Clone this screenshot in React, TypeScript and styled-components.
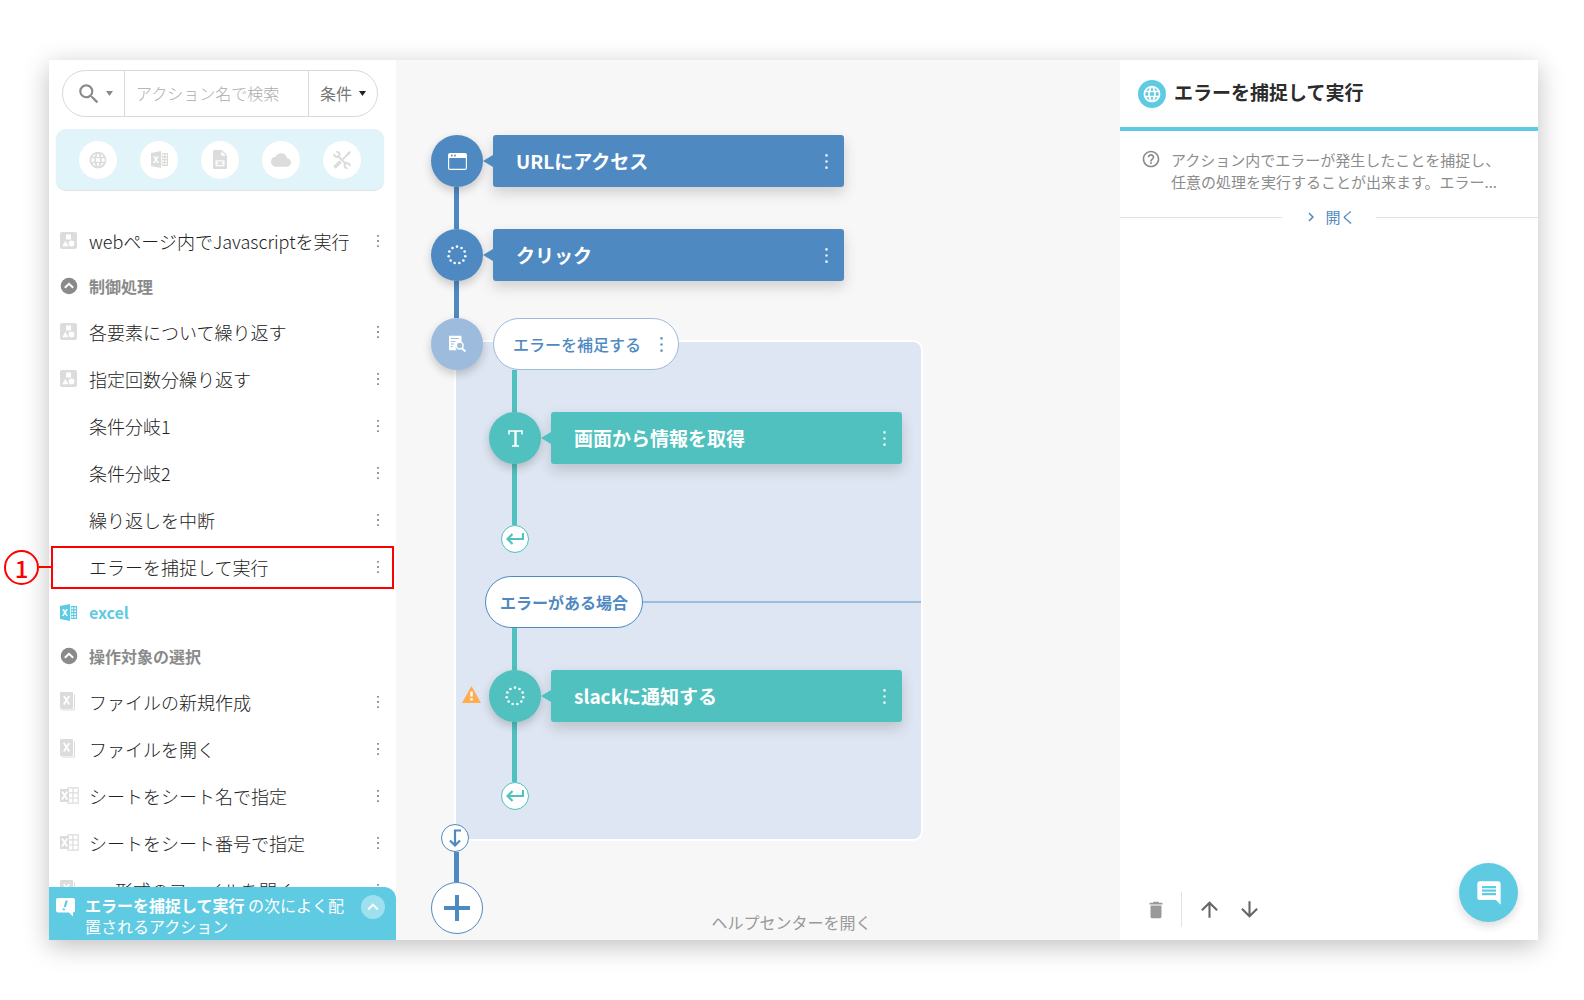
import React from "react";
import styled, { createGlobalStyle, css } from "styled-components";
import {
  MdSearch,
  MdLanguage,
  MdCloud,
  MdComment,
  MdHelpOutline,
  MdDelete,
  MdArrowUpward,
  MdArrowDownward,
  MdKeyboardArrowUp,
  MdChevronRight,
} from "react-icons/md";

const blue = "#4f89c2";
const paleBlue = "#9cbbdd";
const green = "#50c1be";
const cyan = "#5fcbe2";
const groupFill = "#dde6f2";
const grey = "#dcdcdc";

const GlobalStyle = createGlobalStyle`
  *, *::before, *::after { box-sizing: border-box; }
  body { margin: 0; background: #fff; }
  body, button, input, select {
    font-family: "Noto Sans CJK JP", "Noto Sans", sans-serif;
  }
  button { padding: 0; border: 0; background: none; color: inherit; cursor: pointer; }
  h1, h2, h3, p, ul { margin: 0; padding: 0; font-weight: inherit; }
  svg { display: block; flex: none; }
`;

const Page = styled.div`
  height: 100vh;
  padding: 60px 46px 60px 49px;
`;

const Window = styled.div`
  display: flex;
  height: 100%;
  background: #fff;
  box-shadow: 0 6px 24px rgba(0, 0, 0, 0.25);
`;

/* ---------- sidebar ---------- */

const Sidebar = styled.aside`
  display: flex;
  flex-direction: column;
  flex: none;
  width: 347px;
  min-height: 0;
`;

const SearchBar = styled.form`
  display: flex;
  height: 47px;
  margin: 10px 18px 12px 13px;
  border: 1px solid #d8d8d8;
  border-radius: 24px;
`;

const SearchKind = styled.button`
  display: flex;
  align-items: center;
  gap: 4px;
  width: 61px;
  padding-left: 13px;
  color: #8a8a8a;
`;

const SearchInput = styled.input`
  flex: 1;
  min-width: 0;
  padding: 0 11px 2px;
  border: solid #d8d8d8;
  border-width: 0 1px;
  background: none;
  font-size: 16px;
  font-weight: 300;
  outline: none;
  &::placeholder { color: #acacac; }
`;

const Filter = styled.label`
  display: flex;
  align-items: center;
  gap: 1px;
  width: 68px;
  padding-left: 11px;
  color: #222;
`;

const FilterSelect = styled.select`
  appearance: none;
  width: 38px;
  padding: 0 0 2px;
  border: 0;
  background: none;
  color: #777;
  font-size: 16px;
`;

const Categories = styled.nav`
  display: flex;
  align-items: center;
  justify-content: space-between;
  flex: none;
  height: 61px;
  margin: 0 12px 0 7px;
  padding: 0 23px;
  border-radius: 10px;
  background: #e0f4f9;
  box-shadow: 0 1px 1px rgba(0, 0, 0, 0.12);
`;

const CategoryButton = styled.button`
  display: grid;
  place-items: center;
  width: 38px;
  height: 38px;
  border-radius: 50%;
  background: #fff;
  color: ${grey};
`;

const ActionList = styled.ul`
  flex: 1;
  min-height: 0;
  padding-top: 27px;
  overflow-y: clip;
  list-style: none;
`;

const rowBase = css`
  display: flex;
  align-items: center;
  padding: 0 11px;
`;

const ActionRow = styled.li`
  ${rowBase}
  position: relative;
  height: 47px;
`;

const HeadingRow = styled.li<{ $accent?: boolean }>`
  ${rowBase}
  height: 44px;
  color: ${(p) => (p.$accent ? cyan : "#8a8a8a")};
  font-size: 16px;
  font-weight: 700;
`;

const IconSlot = styled.span`
  width: 29px;
  flex: none;
  color: ${grey};
`;

const HeadingIcon = styled(IconSlot)`
  color: inherit;
`;

const ActionName = styled.span`
  flex: 1;
  color: #222;
  font-size: 18px;
  font-weight: 300;
  line-height: 24px;
  white-space: nowrap;
`;

const RowMenu = styled.button`
  color: #8a8a8a;
`;

const Highlight = styled.div`
  position: absolute;
  inset: 3px 2px 1px;
  border: 2px solid #f00;
  pointer-events: none;
`;

const Callout = styled.span`
  position: absolute;
  top: 2px;
  left: -49px;
  display: grid;
  place-items: center;
  width: 35px;
  height: 35px;
  border: 2px solid #f00;
  border-radius: 50%;
  color: #f00;
  font-size: 24px;
  font-weight: 500;
  line-height: 24px;
  &::after {
    content: "";
    position: absolute;
    top: 14px;
    left: 33px;
    width: 13px;
    height: 2px;
    background: #f00;
  }
`;

const Suggestion = styled.footer`
  display: flex;
  flex: none;
  gap: 10px;
  padding: 8px 11px 3px 7px;
  border-radius: 0 12px 0 0;
  background: ${cyan};
  color: #fff;
`;

const TipSlot = styled.span`
  padding-top: 3px;
`;

const SuggestionText = styled.p`
  flex: 1;
  font-size: 16px;
  line-height: 21px;
`;

const ExpandButton = styled.button`
  display: grid;
  place-items: center;
  width: 24px;
  height: 24px;
  border-radius: 50%;
  background: #9fe0ee;
`;

/* ---------- flow canvas ---------- */

const Canvas = styled.main`
  flex: 1;
  min-width: 0;
  padding: 75px 0 0 35px;
  overflow: hidden;
  background: #f7f7f7;
`;

const Step = styled.div`
  position: relative;
  display: flex;
  gap: 10px;
`;

const Disc = styled.span<{ $color: string }>`
  position: relative;
  display: grid;
  place-items: center;
  flex: none;
  width: 52px;
  height: 52px;
  border-radius: 50%;
  background: ${(p) => p.$color};
  color: #fff;
  box-shadow: 0 4px 10px rgba(0, 0, 0, 0.2);
`;

const Card = styled.div<{ $color: string }>`
  position: relative;
  display: flex;
  align-items: center;
  justify-content: space-between;
  width: 351px;
  height: 52px;
  padding: 0 9px 0 23px;
  border-radius: 3px;
  background: ${(p) => p.$color};
  color: #fff;
  box-shadow: 0 6px 14px rgba(0, 0, 0, 0.16);
  &::before {
    content: "";
    position: absolute;
    top: 20px;
    left: -10px;
    border: solid transparent;
    border-width: 6px 10px 6px 0;
    border-right-color: ${(p) => p.$color};
  }
`;

const CardTitle = styled.h3`
  font-size: 19px;
  font-weight: 700;
  line-height: 28px;
`;

const Link = styled.div<{ $color: string; $length: number }>`
  width: 5px;
  height: ${(p) => p.$length}px;
  margin-left: 23px;
  background: ${(p) => p.$color};
`;

const GroupHead = styled(Step)`
  z-index: 1;
  margin-bottom: -30px;
`;

const Group = styled.section`
  width: fit-content;
  margin-left: 23px;
  padding: 28px 19px 29px 33px;
  border: 2px solid #fff;
  border-radius: 0 10px 10px 0;
  background: ${groupFill};
`;

const Pill = styled.div<{ $soft?: boolean }>`
  display: flex;
  align-items: center;
  gap: 12px;
  height: 52px;
  padding: 0 ${(p) => (p.$soft ? "8px 0 19px" : "14px")};
  border: 1px solid ${(p) => (p.$soft ? paleBlue : blue)};
  border-radius: 26px;
  background: #fff;
  color: ${blue};
  font-size: 16px;
  font-weight: ${(p) => (p.$soft ? 500 : 700)};
  white-space: nowrap;
`;

const Branch = styled.div`
  display: flex;
  align-items: center;
  margin: 23px -19px 0 -4px;
  &::after {
    content: "";
    flex: 1;
    height: 2px;
    background: ${paleBlue};
  }
`;

const Joint = styled.span<{ $color: string }>`
  position: relative;
  display: grid;
  place-items: center;
  width: 28px;
  height: 28px;
  margin-left: 12px;
  border: 1px solid ${(p) => p.$color};
  border-radius: 50%;
  background: #fff;
  color: ${(p) => p.$color};
`;

const MergeJoint = styled(Joint)`
  margin: -17px 0 0 10px;
`;

const Warning = styled.span`
  position: absolute;
  top: 16px;
  left: -27px;
`;

const LastRow = styled.div`
  display: flex;
`;

const AddButton = styled.button`
  display: grid;
  place-items: center;
  width: 52px;
  height: 52px;
  border: 1px solid ${blue};
  border-radius: 50%;
  background: #fff;
  color: ${blue};
`;

const HelpLink = styled.a`
  flex: 1;
  align-self: flex-end;
  padding-right: 20px;
  color: #999;
  font-size: 16px;
  line-height: 24px;
  text-align: center;
  text-decoration: none;
`;

/* ---------- detail panel ---------- */

const Detail = styled.aside`
  position: relative;
  display: flex;
  flex-direction: column;
  flex: none;
  width: 418px;
`;

const DetailHeader = styled.header`
  display: flex;
  align-items: center;
  gap: 8px;
  height: 71px;
  padding: 0 18px;
  border-bottom: 4px solid ${cyan};
`;

const Badge = styled.span`
  display: grid;
  place-items: center;
  width: 28px;
  height: 28px;
  border-radius: 50%;
  background: ${cyan};
  color: #fff;
`;

const DetailTitle = styled.h2`
  padding-bottom: 3px;
  color: #2c2c2c;
  font-size: 19px;
  font-weight: 700;
  line-height: 28px;
`;

const Description = styled.div`
  display: flex;
  gap: 10px;
  padding: 18px 0 13px 21px;
  color: #8c8c8c;
`;

const DescriptionText = styled.p`
  font-size: 15px;
  line-height: 22px;
  white-space: nowrap;
`;

const OpenRow = styled.div`
  display: flex;
  align-items: center;
  &::before, &::after {
    content: "";
    flex: 1;
    height: 1px;
    background: #e2e2e2;
  }
`;

const OpenButton = styled.button`
  display: flex;
  align-items: center;
  justify-content: center;
  gap: 5px;
  width: 94px;
  color: ${blue};
  font-size: 15px;
  line-height: 22px;
`;

const Tools = styled.div`
  display: flex;
  align-items: center;
  gap: 15px;
  margin-top: auto;
  padding: 0 25px 13px;
  color: #666;
`;

const TrashButton = styled.button`
  display: flex;
  align-items: center;
  height: 35px;
  padding-right: 14px;
  border-right: 1px solid #e2e2e2;
  color: #999;
`;

const ChatButton = styled.button`
  position: absolute;
  right: 20px;
  bottom: 18px;
  display: grid;
  place-items: center;
  width: 59px;
  height: 59px;
  border-radius: 50%;
  background: ${cyan};
  color: #fff;
  box-shadow: 0 4px 10px rgba(0, 0, 0, 0.14);
`;

/* ---------- icons ---------- */

const Caret = () => (
  <svg width="7" height="5" viewBox="0 0 7 5" fill="currentColor" aria-hidden="true">
    <path d="M0 0h7L3.5 5z" />
  </svg>
);

const ExcelIcon = () => (
  <svg width="17" height="17" viewBox="0 0 17 17" fill="currentColor" aria-hidden="true">
    <path fillRule="evenodd" d="M0 2 10 0v17L0 15zM2.2 5.200 4 8.500l-2 3.400h1.800l1.200-2.200 1.200 2.200H8L6 8.500l1.800-3.300H6L5 7.100 4 5.200z" />
    <path fillRule="evenodd" d="M10.800 2H17v13h-6.200zM11.500 3.300v2h1.600v-2zm2.800 0v2h1.600v-2zm-2.800 3.100v1.700h1.600V6.400zm2.800 0v1.700h1.600V6.400zm-2.800 2.900V11h1.600V9.300zm2.800 0V11h1.600V9.300zm-2.800 2.800v1.600h1.600v-1.600zm2.800 0v1.600h1.600v-1.600z" />
  </svg>
);

const FileIcon = () => (
  <svg width="14" height="19" viewBox="0 0 14 19" fill="currentColor" aria-hidden="true">
    <path fillRule="evenodd" d="M1.500 0H9l5 5v12.500a1.500 1.500 0 0 1-1.500 1.500h-11A1.500 1.500 0 0 1 0 17.500v-16A1.500 1.500 0 0 1 1.500 0zM8.200 1.200v4.600h4.600zM2.500 10.300v5.900h9v-5.900zm1.200 1.200h6.600v1H8.500v1.500h1.800v1H3.700v-1h1.800v-1.500H3.700z" />
  </svg>
);

const ToolsIcon = () => (
  <svg width="18" height="18" viewBox="0 0 18 18" fill="none" stroke="currentColor" aria-hidden="true">
    <path d="M4.500 4.500l9 9" strokeWidth="2.200" />
    <path d="M1.400 2.800a2.600 2.600 0 1 0 2-1.900" strokeWidth="2" />
    <path d="M16.600 15.200a2.600 2.600 0 1 0-2 1.900" strokeWidth="2" />
    <path d="M17 1 9.500 8.500" strokeWidth="1.800" />
    <path d="M17.200.8 14.500 2l1.500 1.500z" fill="currentColor" strokeWidth="1" />
    <path d="M7.500 10.500 1.500 16.500" strokeWidth="3.400" />
  </svg>
);

const ShapesIcon = () => (
  <svg width="17" height="17" viewBox="0 0 17 17" aria-hidden="true">
    <rect width="17" height="17" rx="2" fill="#dcdcdc" />
    <path d="M6 2.500h5v5H6zM2.300 14.300l3.100-5.600 3.100 5.600z" fill="#fff" />
    <circle cx="11.500" cy="11.500" r="2.900" fill="#fff" />
  </svg>
);

const SheetIcon = () => (
  <svg width="16" height="19" viewBox="0 0 16 19" fill="none" aria-hidden="true">
    <path d="M14.500 2.500v15.500h-13" stroke="#dcdcdc" />
    <rect width="13" height="17" rx="1" fill="#dcdcdc" />
    <path d="M3.800 4 9.300 12.500M9.300 4 3.800 12.500" stroke="#fff" strokeWidth="1.800" />
  </svg>
);

const TableIcon = () => (
  <svg width="19" height="17" viewBox="0 0 19 17" fill="none" aria-hidden="true">
    <path d="M7 .8h11.200v15.400H7M9 5.800h9M9 11h9M13 .8v15.400" stroke="#dcdcdc" strokeWidth="1.200" />
    <path d="M0 2h9v13H0z" fill="#dcdcdc" />
    <path d="M2 4.500 7.300 12.500M7.300 4.500 2 12.500" stroke="#fff" strokeWidth="1.800" />
  </svg>
);

const CollapseIcon = () => (
  <svg width="18" height="18" viewBox="0 0 18 18" fill="none" aria-hidden="true">
    <circle cx="9" cy="9" r="8.300" fill="#8a8a8a" />
    <path d="M4.800 10.800 9 6.800l4.200 4" stroke="#fff" strokeWidth="2" />
  </svg>
);

const TipIcon = () => (
  <svg width="19" height="19" viewBox="0 0 19 19" aria-hidden="true">
    <path d="M2 0h15a2 2 0 0 1 2 2v10.500a2 2 0 0 1-2 2v4l-4-4H2a2 2 0 0 1-2-2V2a2 2 0 0 1 2-2z" fill="#fff" />
    <path d="M10.800 2.500 8.800 9M8 10.500l-.5 1.700" stroke={cyan} strokeWidth="2.200" />
  </svg>
);

const BrowserIcon = () => (
  <svg width="19" height="17" viewBox="0 0 19 17" fill="none" aria-hidden="true">
    <rect x=".6" y=".6" width="17.800" height="15.800" rx="1.500" stroke="#fff" strokeWidth="1.200" />
    <path fillRule="evenodd" d="M1 1h17v4H1zM3 1.500h1.500v2H3zM6.200 1.500h1.500v2H6.200z" fill="#fff" />
  </svg>
);

const DottedRing = () => (
  <svg width="20" height="20" viewBox="0 0 20 20" fill="#fff" aria-hidden="true">
    {Array.from({ length: 11 }, (_, i) => {
      const a = (i / 11) * Math.PI * 2 - Math.PI / 2;
      return <circle key={i} cx={10 + 8.4 * Math.cos(a)} cy={10 + 8.4 * Math.sin(a)} r="1.300" />;
    })}
  </svg>
);

const InspectIcon = () => (
  <svg width="18" height="18" viewBox="0 0 18 18" fill="none" aria-hidden="true">
    <path d="M1 .8h12.500v6.400a5 5 0 0 0-4.700 8H1z" fill="#fff" />
    <path d="M2.800 3.500h8M2.800 6.500h4.500M2.800 9h3.200M2.800 11.500h1.800" stroke={paleBlue} />
    <circle cx="11.700" cy="10.500" r="3.400" stroke="#fff" strokeWidth="1.500" />
    <path d="M14 13l3.300 3.700" stroke="#fff" strokeWidth="2" />
  </svg>
);

const SerifTIcon = () => (
  <svg width="15" height="17" viewBox="0 0 15 17" fill="none" stroke="#fff" aria-hidden="true">
    <path d="M1 4.500V1h13v3.500" strokeWidth="1.600" />
    <path d="M7.500 1v15" strokeWidth="2.400" />
    <path d="M4 16h7" strokeWidth="1.600" />
  </svg>
);

const WarningIcon = () => (
  <svg width="19" height="18" viewBox="0 0 19 18" aria-hidden="true">
    <path d="M9.500 0 19 17H0z" fill="#ffab51" />
    <path d="M9.500 5.500v5M9.500 12.300v2.200" stroke="#fff" strokeWidth="2.400" />
  </svg>
);

const ReturnIcon = () => (
  <svg width="18" height="12" viewBox="0 0 18 12" fill="none" stroke="currentColor" strokeWidth="2.200" aria-hidden="true">
    <path d="M17 0v6H2M6.500 1 1.500 6l5 5" />
  </svg>
);

const MergeIcon = () => (
  <svg width="12" height="18" viewBox="0 0 12 18" fill="none" stroke="currentColor" strokeWidth="2.200" aria-hidden="true">
    <path d="M12 1.500H6V16M1 11.500l5 5 5-5" />
  </svg>
);

const PlusIcon = () => (
  <svg width="26" height="26" viewBox="0 0 26 26" fill="none" stroke="currentColor" strokeWidth="4" aria-hidden="true">
    <path d="M13 0v26M0 13h26" />
  </svg>
);

const DotsIcon = ({ size = 14 }: { size?: number }) => (
  <svg width={size} height={size} viewBox="0 0 14 14" fill="currentColor" aria-hidden="true">
    <path d="M6.100 1h1.800v1.800H6.100zM6.100 6.100h1.800v1.800H6.100zM6.100 11.200h1.800V13H6.100z" />
  </svg>
);

/* ---------- content ---------- */

type Item = { kind: "action" | "heading" | "app"; text: string; icon?: React.ReactNode; marked?: boolean };

const items: Item[] = [
  { kind: "action", text: "webページ内でJavascriptを実行", icon: <ShapesIcon /> },
  { kind: "heading", text: "制御処理" },
  { kind: "action", text: "各要素について繰り返す", icon: <ShapesIcon /> },
  { kind: "action", text: "指定回数分繰り返す", icon: <ShapesIcon /> },
  { kind: "action", text: "条件分岐1" },
  { kind: "action", text: "条件分岐2" },
  { kind: "action", text: "繰り返しを中断" },
  { kind: "action", text: "エラーを捕捉して実行", marked: true },
  { kind: "app", text: "excel" },
  { kind: "heading", text: "操作対象の選択" },
  { kind: "action", text: "ファイルの新規作成", icon: <SheetIcon /> },
  { kind: "action", text: "ファイルを開く", icon: <SheetIcon /> },
  { kind: "action", text: "シートをシート名で指定", icon: <TableIcon /> },
  { kind: "action", text: "シートをシート番号で指定", icon: <TableIcon /> },
  { kind: "action", text: "csv形式のファイルを開く", icon: <SheetIcon /> },
];

const categories = [
  { label: "web", icon: <MdLanguage size={20} /> },
  { label: "excel", icon: <ExcelIcon /> },
  { label: "ファイル", icon: <FileIcon /> },
  { label: "クラウド", icon: <MdCloud size={20} /> },
  { label: "ツール", icon: <ToolsIcon /> },
];

const ListItem = ({ item }: { item: Item }) => {
  if (item.kind !== "action") {
    return (
      <HeadingRow $accent={item.kind === "app"}>
        <HeadingIcon>{item.kind === "app" ? <ExcelIcon /> : <CollapseIcon />}</HeadingIcon>
        {item.text}
      </HeadingRow>
    );
  }
  return (
    <ActionRow>
      <IconSlot>{item.icon}</IconSlot>
      <ActionName>{item.text}</ActionName>
      <RowMenu aria-label={item.text}>
        <DotsIcon />
      </RowMenu>
      {item.marked && (
        <Highlight>
          <Callout>1</Callout>
        </Highlight>
      )}
    </ActionRow>
  );
};

type StepProps = { color: string; icon: React.ReactNode; title: string; warning?: boolean };

const FlowStep = ({ color, icon, title, warning }: StepProps) => (
  <Step>
    {warning && (
      <Warning>
        <WarningIcon />
      </Warning>
    )}
    <Disc $color={color}>{icon}</Disc>
    <Card $color={color}>
      <CardTitle>{title}</CardTitle>
      <button aria-label={title}>
        <DotsIcon size={17} />
      </button>
    </Card>
  </Step>
);

export default function App() {
  return (
    <Page>
      <GlobalStyle />
      <Window>
        <Sidebar>
          <SearchBar>
            <SearchKind type="button" aria-label="検索">
              <MdSearch size={26} />
              <Caret />
            </SearchKind>
            <SearchInput aria-label="アクション名で検索" placeholder="アクション名で検索" />
            <Filter>
              <FilterSelect aria-label="条件">
                <option>条件</option>
              </FilterSelect>
              <Caret />
            </Filter>
          </SearchBar>
          <Categories>
            {categories.map((c) => (
              <CategoryButton key={c.label} aria-label={c.label}>
                {c.icon}
              </CategoryButton>
            ))}
          </Categories>
          <ActionList>
            {items.map((item) => (
              <ListItem key={item.text} item={item} />
            ))}
          </ActionList>
          <Suggestion>
            <TipSlot>
              <TipIcon />
            </TipSlot>
            <SuggestionText>
              <b>エラーを捕捉して実行</b> の次によく配置されるアクション
            </SuggestionText>
            <ExpandButton aria-label="開く">
              <MdKeyboardArrowUp size={22} />
            </ExpandButton>
          </Suggestion>
        </Sidebar>

        <Canvas>
          <FlowStep color={blue} icon={<BrowserIcon />} title="URLにアクセス" />
          <Link $color={blue} $length={42} />
          <FlowStep color={blue} icon={<DottedRing />} title="クリック" />
          <Link $color={blue} $length={37} />
          <GroupHead>
            <Disc $color={paleBlue}>
              <InspectIcon />
            </Disc>
            <Pill $soft>
              エラーを補足する
              <button aria-label="エラーを補足する">
                <DotsIcon size={17} />
              </button>
            </Pill>
          </GroupHead>
          <Group>
            <Link $color={green} $length={42} />
            <FlowStep color={green} icon={<SerifTIcon />} title="画面から情報を取得" />
            <Link $color={green} $length={61} />
            <Joint $color={green}>
              <ReturnIcon />
            </Joint>
            <Branch>
              <Pill>エラーがある場合</Pill>
            </Branch>
            <Link $color={green} $length={42} />
            <FlowStep color={green} icon={<DottedRing />} title="slackに通知する" warning />
            <Link $color={green} $length={60} />
            <Joint $color={green}>
              <ReturnIcon />
            </Joint>
          </Group>
          <MergeJoint $color={blue}>
            <MergeIcon />
          </MergeJoint>
          <Link $color={blue} $length={30} />
          <LastRow>
            <AddButton aria-label="追加">
              <PlusIcon />
            </AddButton>
            <HelpLink href="#help">ヘルプセンターを開く</HelpLink>
          </LastRow>
        </Canvas>

        <Detail>
          <DetailHeader>
            <Badge>
              <MdLanguage size={20} />
            </Badge>
            <DetailTitle>エラーを捕捉して実行</DetailTitle>
          </DetailHeader>
          <Description>
            <MdHelpOutline size={20} />
            <DescriptionText>
              アクション内でエラーが発生したことを捕捉し、
              <br />
              任意の処理を実行することが出来ます。エラー...
            </DescriptionText>
          </Description>
          <OpenRow>
            <OpenButton>
              <MdChevronRight size={18} />
              開く
            </OpenButton>
          </OpenRow>
          <Tools>
            <TrashButton aria-label="削除">
              <MdDelete size={22} />
            </TrashButton>
            <button aria-label="上へ">
              <MdArrowUpward size={25} />
            </button>
            <button aria-label="下へ">
              <MdArrowDownward size={25} />
            </button>
          </Tools>
          <ChatButton aria-label="チャット">
            <MdComment size={28} />
          </ChatButton>
        </Detail>
      </Window>
    </Page>
  );
}
